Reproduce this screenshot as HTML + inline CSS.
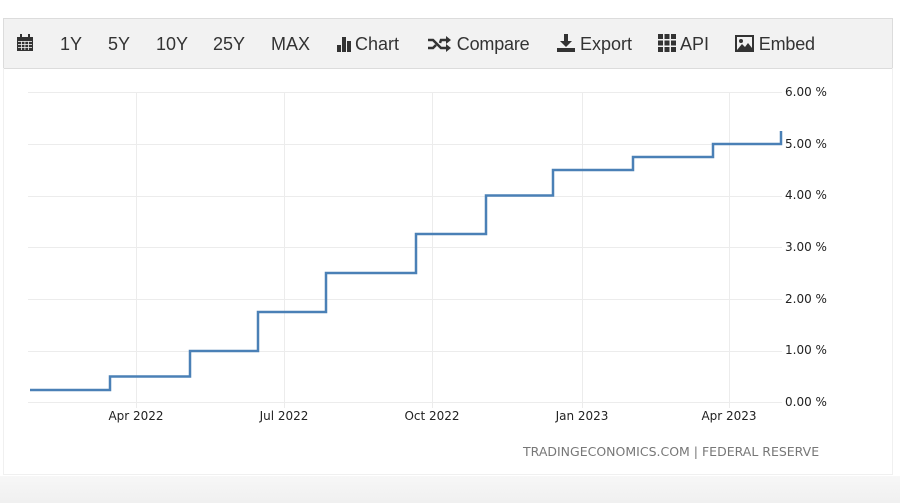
<!DOCTYPE html>
<html><head><meta charset="utf-8"><style>
body{margin:0;width:900px;height:503px;background:#fff;position:relative;overflow:hidden;font-family:"Liberation Sans",sans-serif}
.tb{position:absolute;left:3px;top:18px;width:888px;height:49px;background:#f2f2f2;border:1px solid #dcdcdc;}
.tb span{position:absolute;top:14px;font-size:18px;color:#333;line-height:22px;white-space:nowrap}
.panel{position:absolute;left:3px;top:68px;width:888px;height:406px;border:1px solid #f0f0f0;border-top:none}
.bottom{position:absolute;left:0;top:476px;width:900px;height:27px;background:linear-gradient(#f7f7f7,#f0f0f0)}
svg text{font-family:"DejaVu Sans",sans-serif;font-size:12px;fill:#222}
</style></head><body>
<div class="tb">
<span style="left:11px"><svg width="20" height="20" viewBox="0 0 20 20"><rect x="2" y="4" width="16" height="14" fill="#333"/><rect x="5" y="1" width="2" height="4" fill="#333"/><rect x="13" y="1" width="2" height="4" fill="#333"/><g fill="#f2f2f2"><rect x="3" y="8" width="14" height="0.8"/><rect x="3" y="11" width="14" height="0.8"/><rect x="3" y="14" width="14" height="0.8"/><rect x="6" y="8" width="0.8" height="9"/><rect x="9.5" y="8" width="0.8" height="9"/><rect x="13" y="8" width="0.8" height="9"/></g></svg></span>
<span style="left:56px">1Y</span>
<span style="left:104px">5Y</span>
<span style="left:152px">10Y</span>
<span style="left:209px">25Y</span>
<span style="left:267px">MAX</span>
<span style="left:333px"><svg width="18" height="16" viewBox="0 0 18 16" style="vertical-align:-2px"><rect x="0" y="9" width="4" height="7" fill="#333"/><rect x="5" y="1" width="4" height="15" fill="#333"/><rect x="10" y="5" width="4" height="11" fill="#333"/></svg>Chart</span>
<span style="left:424px;letter-spacing:-0.2px"><svg width="24" height="16" viewBox="0 0 24 16" style="vertical-align:-2px"><path d="M0 4h5l8 8h6M0 12h5l3-3M12 7l1-3h6" stroke="#333" stroke-width="2.5" fill="none"/><path d="M18 0l5 4-5 4zM18 8l5 4-5 4z" fill="#333"/></svg> Compare</span>
<span style="left:553px"><svg width="18" height="18" viewBox="0 0 18 18" style="vertical-align:-2px"><path d="M7 0h4v7h4l-6 6-6-6h4z" fill="#333"/><rect x="0" y="14" width="18" height="4" fill="#333"/></svg> Export</span>
<span style="left:654px"><svg width="18" height="18" viewBox="0 0 18 18" style="vertical-align:-2px" fill="#333"><rect x="0" y="0" width="5" height="5"/><rect x="6.5" y="0" width="5" height="5"/><rect x="13" y="0" width="5" height="5"/><rect x="0" y="6.5" width="5" height="5"/><rect x="6.5" y="6.5" width="5" height="5"/><rect x="13" y="6.5" width="5" height="5"/><rect x="0" y="13" width="5" height="5"/><rect x="6.5" y="13" width="5" height="5"/><rect x="13" y="13" width="5" height="5"/></svg> API</span>
<span style="left:731px;letter-spacing:-0.2px"><svg width="19" height="17" viewBox="0 0 19 17" style="vertical-align:-2px"><rect x="0" y="0" width="19" height="17" fill="#333"/><rect x="2" y="2" width="15" height="13" fill="#f2f2f2"/><path d="M2 15l5-6 3 3 3-4 4 5v2z" fill="#333"/><circle cx="6" cy="6" r="2" fill="#333"/></svg> Embed</span>
</div>
<div class="panel"></div>
<svg style="position:absolute;left:0;top:0" width="900" height="503">
<g stroke="#ececec" stroke-width="1">
<line x1="28" x2="782" y1="92.5" y2="92.5"/><line x1="28" x2="782" y1="144.5" y2="144.5"/><line x1="28" x2="782" y1="196.5" y2="196.5"/><line x1="28" x2="782" y1="247.5" y2="247.5"/><line x1="28" x2="782" y1="299.5" y2="299.5"/><line x1="28" x2="782" y1="351.5" y2="351.5"/><line x1="28" x2="782" y1="402.5" y2="402.5"/>
<line x1="136.5" x2="136.5" y1="92" y2="408"/><line x1="284.5" x2="284.5" y1="92" y2="408"/><line x1="432.5" x2="432.5" y1="92" y2="408"/><line x1="582.5" x2="582.5" y1="92" y2="408"/><line x1="729.5" x2="729.5" y1="92" y2="408"/>
</g>
<path d="M30 390H110V376.5H190V351H258V312H326V273H416V234H486V195.5H553V170H633V157H713V144H781V131" fill="none" stroke="#4a80b6" stroke-width="2.5"/>
<g>
<text x="785" y="96">6.00 %</text><text x="785" y="148">5.00 %</text><text x="785" y="199">4.00 %</text><text x="785" y="251">3.00 %</text><text x="785" y="303">2.00 %</text><text x="785" y="354">1.00 %</text><text x="785" y="406">0.00 %</text>
<text x="136" y="420" text-anchor="middle">Apr 2022</text><text x="284" y="420" text-anchor="middle">Jul 2022</text><text x="432" y="420" text-anchor="middle">Oct 2022</text><text x="582" y="420" text-anchor="middle">Jan 2023</text><text x="729" y="420" text-anchor="middle">Apr 2023</text>
<text x="523" y="456" style="fill:#777;font-size:12.5px">TRADINGECONOMICS.COM | FEDERAL RESERVE</text>
</g>
</svg>
<div class="bottom"></div>
</body></html>
